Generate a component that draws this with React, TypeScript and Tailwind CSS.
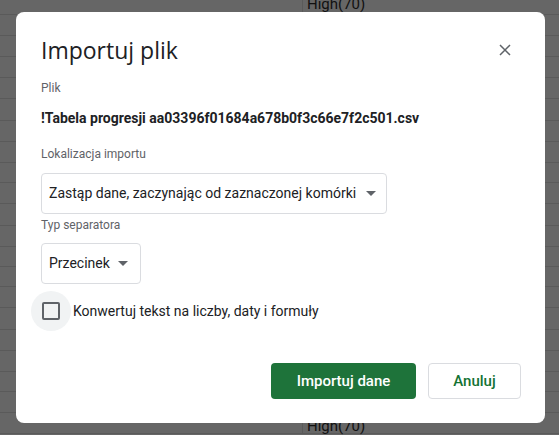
import React from "react";

const rowHeights = [15, 21, 21, 21, 21, 22, 21, 21, 20, 21, 22, 21, 20, 20, 21, 22, 21, 21, 20, 21, 21];

function Caret() {
  return (
    <svg width="10" height="5" viewBox="0 0 10 5" className="shrink-0">
      <path d="M0 0 L10 0 L5 5 Z" fill="#5f6368" />
    </svg>
  );
}

export default function App() {
  return (
    <div className="relative w-[559px] h-[435px] overflow-hidden bg-[#666666]" style={{ fontFamily: "Roboto, 'Liberation Sans', sans-serif" }}>
      {/* dimmed spreadsheet background */}
      <div className="flex flex-col">
        {rowHeights.map((h, i) => (
          <div key={i} className="flex border-b border-[#5a5a5a]" style={{ height: h }}>
            <div className="w-[303px] border-r border-[#5a5a5a]" />
            <div className="flex-1 pl-[4px] text-[15px] leading-none text-[#111] flex items-end pb-[2px]">
              {i === 0 ? <span>High(70)</span> : null}
              {i === rowHeights.length - 1 ? <span className="mt-[6px] self-start">High(70)</span> : null}
            </div>
          </div>
        ))}
      </div>

      {/* dialog */}
      <div className="absolute left-[16px] top-[12px] w-[529px] h-[411px] bg-white rounded-lg pt-[24px] pl-[25px] pr-[24px] flex flex-col">
        <div className="flex items-center justify-between h-[28px]">
          <h1 className="text-[23px] leading-[28px] text-[#202124]" style={{ fontFamily: "'Open Sans', Roboto, sans-serif" }}>
            Importuj plik
          </h1>
          <svg width="12" height="12" viewBox="0 0 12 12" className="mr-[10px]">
            <path d="M1 1 L11 11 M11 1 L1 11" stroke="#5f6368" strokeWidth="1.5" />
          </svg>
        </div>

        <div className="mt-[16px] h-[16px] leading-[16px] text-[12px] text-[#5f6368]">Plik</div>
        <div className="mt-[12px] h-[20px] leading-[20px] text-[14px] font-bold text-[#202124]">
          !Tabela progresji aa03396f01684a678b0f3c66e7f2c501.csv
        </div>

        <div className="mt-[18px] h-[16px] leading-[16px] text-[12px] text-[#5f6368]">Lokalizacja importu</div>
        <div className="mt-[11px] h-[41px] w-[346px] border border-[#dadce0] rounded-[4px] flex items-center pl-[7px] pr-[12px] gap-[10px]">
          <span className="text-[14px] text-[#202124] whitespace-nowrap">Zastąp dane, zaczynając od zaznaczonej komórki</span>
          <Caret />
        </div>

        <div className="mt-[3px] h-[16px] leading-[16px] text-[12px] text-[#5f6368]">Typ separatora</div>
        <div className="mt-[10px] h-[41px] w-[100px] border border-[#dadce0] rounded-[4px] flex items-center pl-[7px] gap-[8px]">
          <span className="text-[14px] text-[#202124]">Przecinek</span>
          <Caret />
        </div>

        <div className="mt-[7px] flex items-center -ml-[10px]">
          <div className="w-[40px] h-[40px] rounded-full bg-[#f1f3f4] flex items-center justify-center">
            <div className="w-[18px] h-[18px] border-2 border-[#5f6368] rounded-[2px]" />
          </div>
          <span className="ml-[2px] text-[14px] text-[#202124]">Konwertuj tekst na liczby, daty i formuły</span>
        </div>

        <div className="mt-[32px] flex justify-end gap-[12px]">
          <button className="h-[36px] w-[145px] rounded-[4px] bg-[#1e733a] text-white text-[15px] font-medium">
            Importuj dane
          </button>
          <button className="h-[36px] w-[93px] rounded-[4px] border border-[#dadce0] bg-white text-[#137333] text-[15px] font-medium">
            Anuluj
          </button>
        </div>
      </div>
    </div>
  );
}
